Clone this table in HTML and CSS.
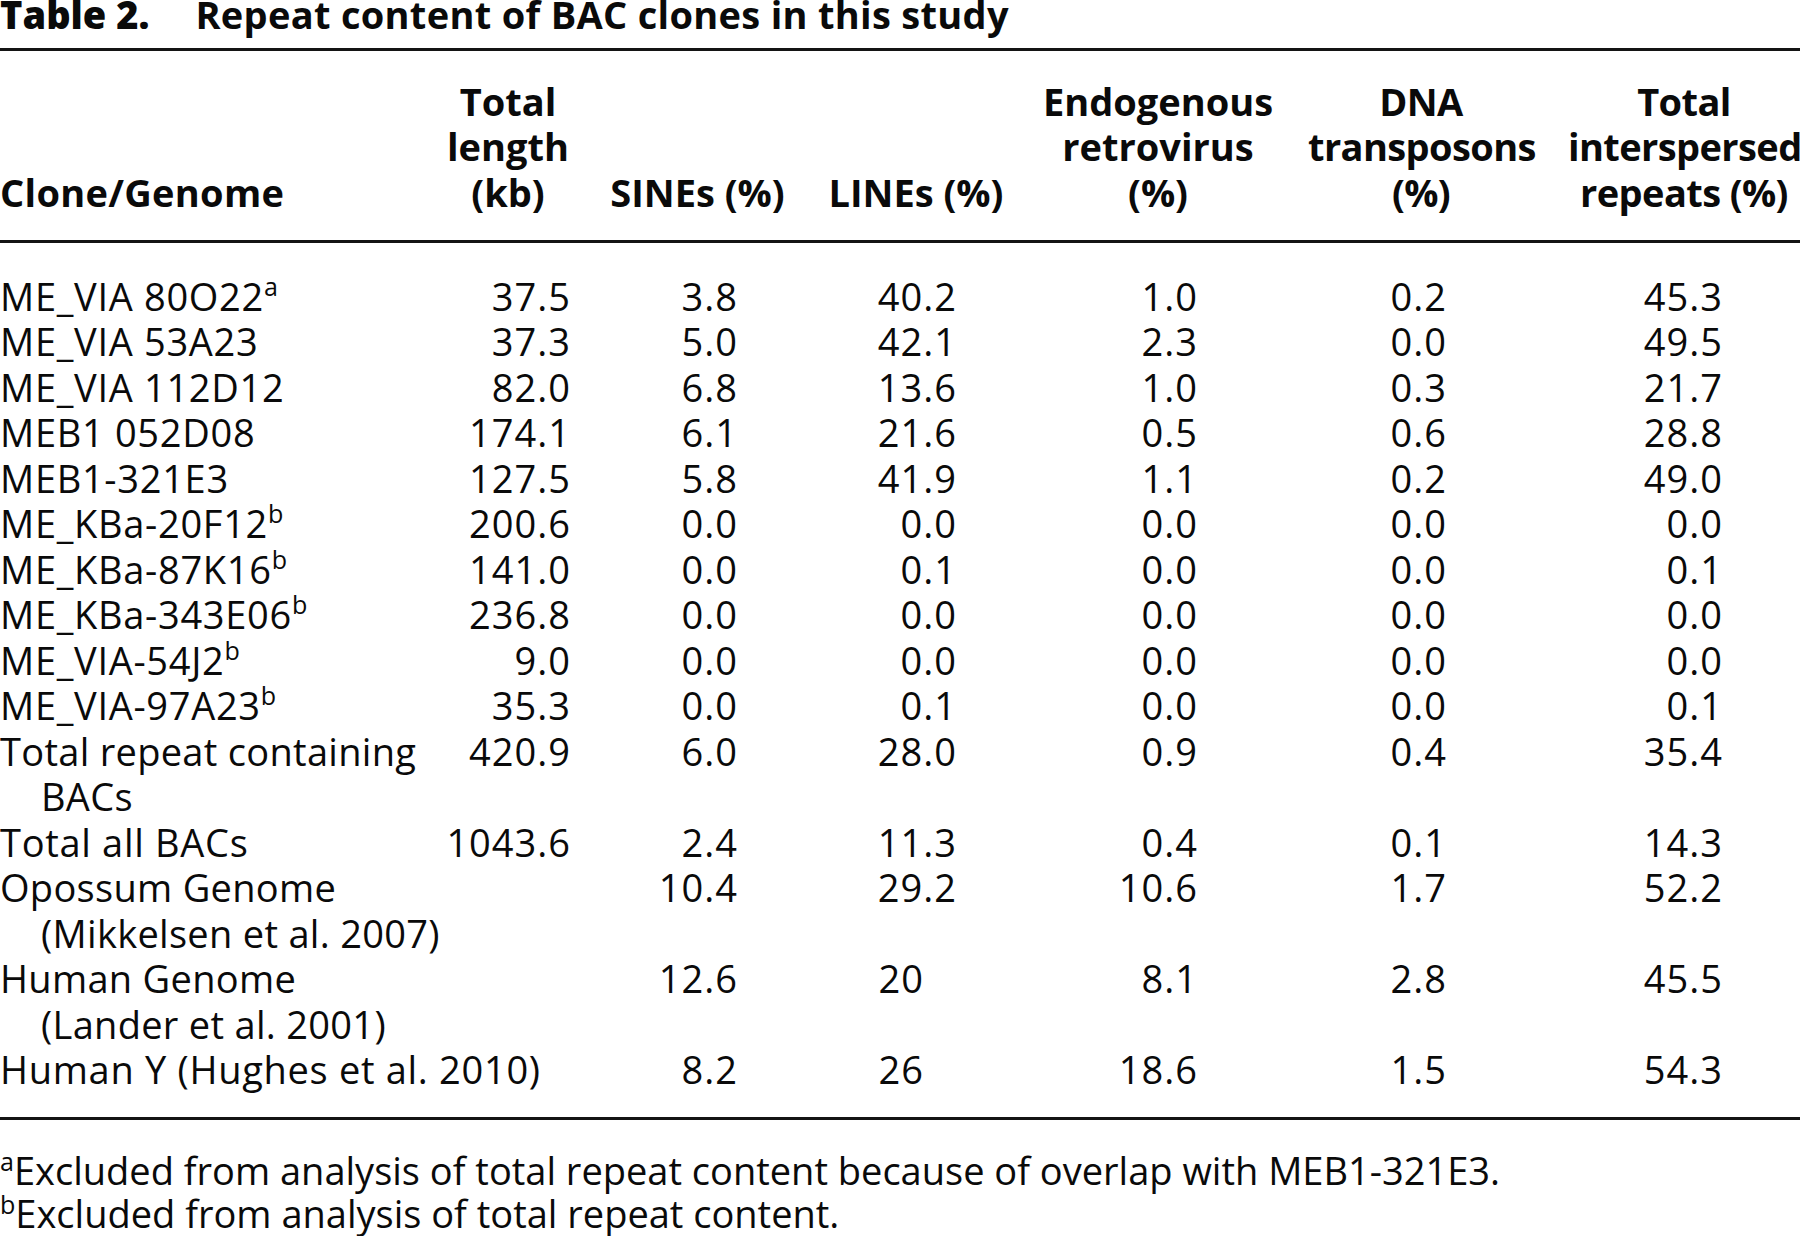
FILE: index.html
```html
<!DOCTYPE html>
<html lang="en">
<head>
<meta charset="utf-8">
<title>Table 2. Repeat content of BAC clones in this study</title>
<link rel="stylesheet" href="styles.css">
</head>
<body>
<div class="caption"><span class="label">Table 2.</span><span class="caption-text">Repeat content of BAC clones in this study</span></div>
<table class="data">
  <colgroup>
    <col class="c1"><col class="c2"><col class="c3"><col class="c4"><col class="c5"><col class="c6"><col class="c7">
  </colgroup>
  <thead>
    <tr>
      <th class="name">Clone/Genome</th>
      <th>Total<br>length<br>(kb)</th>
      <th>SINEs (%)</th>
      <th>LINEs (%)</th>
      <th>Endogenous<br>retrovirus<br>(%)</th>
      <th class="tight">DNA<br>transposons<br>(%)</th>
      <th class="tight">Total<br>interspersed<br>repeats (%)</th>
    </tr>
  </thead>
  <tbody>
    <tr class="first"><td class="name">ME_VIA 80O22<sup>a</sup></td><td class="n2">37.5</td><td class="n3">3.8</td><td class="n4">40.2</td><td class="n5">1.0</td><td class="n6">0.2</td><td class="n7">45.3</td></tr>
    <tr><td class="name">ME_VIA 53A23</td><td class="n2">37.3</td><td class="n3">5.0</td><td class="n4">42.1</td><td class="n5">2.3</td><td class="n6">0.0</td><td class="n7">49.5</td></tr>
    <tr><td class="name">ME_VIA 112D12</td><td class="n2">82.0</td><td class="n3">6.8</td><td class="n4">13.6</td><td class="n5">1.0</td><td class="n6">0.3</td><td class="n7">21.7</td></tr>
    <tr><td class="name">MEB1 052D08</td><td class="n2">174.1</td><td class="n3">6.1</td><td class="n4">21.6</td><td class="n5">0.5</td><td class="n6">0.6</td><td class="n7">28.8</td></tr>
    <tr><td class="name">MEB1-321E3</td><td class="n2">127.5</td><td class="n3">5.8</td><td class="n4">41.9</td><td class="n5">1.1</td><td class="n6">0.2</td><td class="n7">49.0</td></tr>
    <tr><td class="name">ME_KBa-20F12<sup>b</sup></td><td class="n2">200.6</td><td class="n3">0.0</td><td class="n4">0.0</td><td class="n5">0.0</td><td class="n6">0.0</td><td class="n7">0.0</td></tr>
    <tr><td class="name">ME_KBa-87K16<sup>b</sup></td><td class="n2">141.0</td><td class="n3">0.0</td><td class="n4">0.1</td><td class="n5">0.0</td><td class="n6">0.0</td><td class="n7">0.1</td></tr>
    <tr><td class="name">ME_KBa-343E06<sup>b</sup></td><td class="n2">236.8</td><td class="n3">0.0</td><td class="n4">0.0</td><td class="n5">0.0</td><td class="n6">0.0</td><td class="n7">0.0</td></tr>
    <tr><td class="name">ME_VIA-54J2<sup>b</sup></td><td class="n2">9.0</td><td class="n3">0.0</td><td class="n4">0.0</td><td class="n5">0.0</td><td class="n6">0.0</td><td class="n7">0.0</td></tr>
    <tr><td class="name">ME_VIA-97A23<sup>b</sup></td><td class="n2">35.3</td><td class="n3">0.0</td><td class="n4">0.1</td><td class="n5">0.0</td><td class="n6">0.0</td><td class="n7">0.1</td></tr>
    <tr><td class="name hang">Total repeat containing<br>BACs</td><td class="n2">420.9</td><td class="n3">6.0</td><td class="n4">28.0</td><td class="n5">0.9</td><td class="n6">0.4</td><td class="n7">35.4</td></tr>
    <tr><td class="name">Total all BACs</td><td class="n2">1043.6</td><td class="n3">2.4</td><td class="n4">11.3</td><td class="n5">0.4</td><td class="n6">0.1</td><td class="n7">14.3</td></tr>
    <tr><td class="name hang">Opossum Genome<br>(Mikkelsen et al. 2007)</td><td class="n2"></td><td class="n3">10.4</td><td class="n4">29.2</td><td class="n5">10.6</td><td class="n6">1.7</td><td class="n7">52.2</td></tr>
    <tr><td class="name hang">Human Genome<br>(Lander et al. 2001)</td><td class="n2"></td><td class="n3">12.6</td><td class="n4 int">20</td><td class="n5">8.1</td><td class="n6">2.8</td><td class="n7">45.5</td></tr>
    <tr class="last"><td class="name">Human Y (Hughes et al. 2010)</td><td class="n2"></td><td class="n3">8.2</td><td class="n4 int">26</td><td class="n5">18.6</td><td class="n6">1.5</td><td class="n7">54.3</td></tr>
  </tbody>
</table>
<div class="notes">
  <p class="note"><sup>a</sup>Excluded from analysis of total repeat content because of overlap with MEB1-321E3.</p>
  <p class="note"><sup>b</sup>Excluded from analysis of total repeat content.</p>
</div>
</body>
</html>
```
FILE: styles.css
```css
html, body {
  margin: 0;
  padding: 0;
  background: #ffffff;
  overflow: hidden;
}

body {
  font-family: "Open Sans", "Noto Sans", "Liberation Sans", sans-serif;
  font-size: 38px;
  line-height: 45.5px;
  color: #0a0a0a;
  width: 1800px;
}

.caption {
  margin-top: -8px;
  height: 43px;
  white-space: nowrap;
  font-weight: 700;
}

.caption .label {
  font-weight: 800;
  margin-right: 46px;
}

.caption .caption-text {
  letter-spacing: 0.3px;
}

.data {
  margin-top: 13px;
  width: 1800px;
  table-layout: fixed;
  border-collapse: collapse;
  border-top: 3px solid #141414;
  border-bottom: 3px solid #141414;
}

.c1 { width: 411px; }
.c2 { width: 160px; }
.c3 { width: 219px; }
.c4 { width: 218px; }
.c5 { width: 266px; }
.c6 { width: 260px; }
.c7 { width: 266px; }

.data th,
.data td {
  padding: 0 0 0 34px;
  vertical-align: top;
  white-space: nowrap;
}

.data th.name,
.data td.name {
  padding-left: 0;
  text-align: left;
}

.data thead th {
  font-weight: 700;
  text-align: center;
  vertical-align: bottom;
  padding-top: 27.5px;
  padding-bottom: 25px;
  border-bottom: 3px solid #141414;
  letter-spacing: 0;
}

.data thead th.name {
  letter-spacing: 0.3px;
}

.data thead th.tight {
  letter-spacing: -0.6px;
}

.data tbody td {
  letter-spacing: 1px;
  text-align: right;
}

.data tbody td.name {
  letter-spacing: 0.7px;
}

.data tbody td.hang {
  letter-spacing: 0.3px;
}

.data tbody tr.first td { padding-top: 30.5px; }
.data tbody tr.last td { padding-bottom: 24.5px; }

.data td.hang {
  padding-left: 41px;
  text-indent: -41px;
}

.data td.n2 { padding-right: 0; }
.data td.n3 { padding-right: 52px; }
.data td.n4 { padding-right: 51px; }
.data td.n5 { padding-right: 76px; }
.data td.n6 { padding-right: 87px; }
.data td.n7 { padding-right: 77px; }
.data td.n4.int { padding-right: 84px; }

sup {
  font-size: 66%;
  line-height: 0;
  vertical-align: 0.6em;
  letter-spacing: 0;
}

.notes {
  margin-top: 28.5px;
}

.note {
  margin: 0;
  line-height: 43.6px;
  white-space: nowrap;
}

.note sup {
  vertical-align: 0.55em;
}
```
